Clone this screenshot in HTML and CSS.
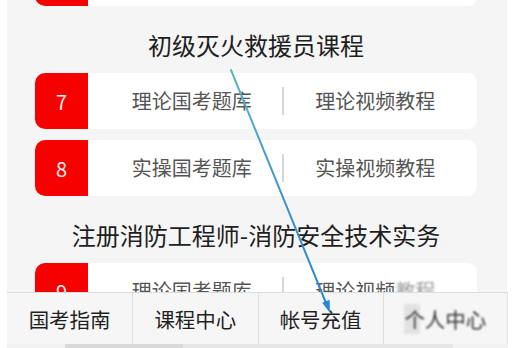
FILE: index.html
```html
<!DOCTYPE html>
<html lang="zh-CN">
<head>
<meta charset="utf-8">
<title>课程</title>
<link rel="stylesheet" href="styles.css">
</head>
<body>
<div class="screen">
  <main class="content">
    <div class="row row-top">
      <div class="badge"></div>
      <div class="card"></div>
    </div>

    <h2 class="section-title">初级灭火救援员课程</h2>

    <div class="row">
      <div class="badge">7</div>
      <div class="card">
        <span class="cell cell-left">理论国考题库</span>
        <span class="divider"></span>
        <span class="cell cell-right">理论视频教程</span>
      </div>
    </div>

    <div class="row">
      <div class="badge">8</div>
      <div class="card">
        <span class="cell cell-left">实操国考题库</span>
        <span class="divider"></span>
        <span class="cell cell-right">实操视频教程</span>
      </div>
    </div>

    <h2 class="section-title">注册消防工程师-消防安全技术实务</h2>

    <div class="row">
      <div class="badge">9</div>
      <div class="card">
        <span class="cell cell-left">理论国考题库</span>
        <span class="divider"></span>
        <span class="cell cell-right">理论视频<span class="mosaic-soft">教程</span></span>
      </div>
    </div>
  </main>

  <nav class="tabbar">
    <div class="tabs">
      <a class="tab">国考指南</a>
      <a class="tab">课程中心</a>
      <a class="tab">帐号充值</a>
      <a class="tab tab-mosaic"><span class="mosaic">个人中心</span></a>
    </div>
    <div class="strip"><span class="strip-a"></span><span class="strip-b"></span><span class="strip-c"></span></div>
  </nav>

  <svg class="annotation" width="515" height="348" viewBox="0 0 515 348" aria-hidden="true">
    <defs>
      <linearGradient id="arrowGrad" x1="231" y1="70" x2="330" y2="313" gradientUnits="userSpaceOnUse">
        <stop offset="0" stop-color="#5fb3c9"/>
        <stop offset="0.5" stop-color="#3b93cf"/>
        <stop offset="1" stop-color="#2a86d6"/>
      </linearGradient>
    </defs>
    <line x1="231" y1="70" x2="326" y2="303" stroke="url(#arrowGrad)" stroke-width="2" stroke-linecap="round"/>
    <polygon points="330,313 329.6,299.8 322.2,302.8" fill="#2a86d6"/>
  </svg>
</div>
</body>
</html>
```

FILE: styles.css
```css
* {
  box-sizing: border-box;
}

html, body {
  margin: 0;
  padding: 0;
  background: #ffffff;
}

body {
  font-family: "Noto Sans CJK SC", "Noto Sans", sans-serif;
}

.screen {
  position: relative;
  width: 515px;
  height: 348px;
  overflow: hidden;
  background: #ffffff;
}

.content {
  display: flex;
  flex-direction: column;
  gap: 11px;
  margin: 0 8px 0 7px;
  padding: 0 30px 0 28px;
  min-height: 348px;
  background: #f5f5f5;
}

.row {
  display: flex;
  height: 56px;
  flex: none;
}

.row-top {
  margin-top: -50px;
}

.badge {
  width: 53px;
  display: flex;
  align-items: center;
  justify-content: center;
  background: #f70000;
  color: #ffecec;
  font-size: 20px;
  border-radius: 10px 0 0 10px;
}

.card {
  flex: 1;
  display: grid;
  grid-template-columns: 1fr 2px 1fr;
  align-items: center;
  background: #ffffff;
  border-radius: 0 9px 9px 0;
}

.cell {
  text-align: center;
  font-size: 20px;
  line-height: 24px;
  color: #555555;
  white-space: nowrap;
}

.cell-left {
  padding-left: 14px;
}

.cell-right {
  padding-right: 10px;
}

.divider {
  width: 2px;
  height: 28px;
  background: #d6d6d6;
}

.section-title {
  margin: -11px 0;
  padding: 27px 0 16px;
  height: 67px;
  flex: none;
  text-align: center;
  font-size: 24px;
  line-height: 24px;
  font-weight: 400;
  color: #1e1e1e;
  white-space: nowrap;
}

.mosaic-soft {
  filter: blur(1.2px);
  color: #9a9a9a;
}

.tabbar {
  position: absolute;
  left: 7px;
  bottom: 0;
  width: 501px;
  height: 56px;
  display: flex;
  flex-direction: column;
  background: #f6f6f6;
  border-top: 1px solid #dcdcdc;
}

.tabs {
  flex: 1;
  display: grid;
  grid-template-columns: repeat(4, 1fr);
}

.tab {
  display: flex;
  align-items: center;
  justify-content: center;
  font-size: 20.5px;
  color: #1f1f1f;
  border-left: 1px solid #dddddd;
}

.tab:first-child {
  border-left: none;
}

.tab-mosaic {
  border-right: 1px solid #e4e4e4;
}

.mosaic {
  filter: blur(0.9px);
  color: #333333;
  background: linear-gradient(90deg, #e2e2e2 0 20%, transparent 20% 100%);
}

.strip {
  height: 4px;
  display: flex;
  background: #f2f2f2;
}

.strip-a {
  width: 58px;
}

.strip-b {
  width: 118px;
  background: #d9d9d9;
}

.strip-c {
  width: 270px;
  background: #e6e6e6;
}

.annotation {
  position: absolute;
  left: 0;
  top: 0;
  pointer-events: none;
}
```
